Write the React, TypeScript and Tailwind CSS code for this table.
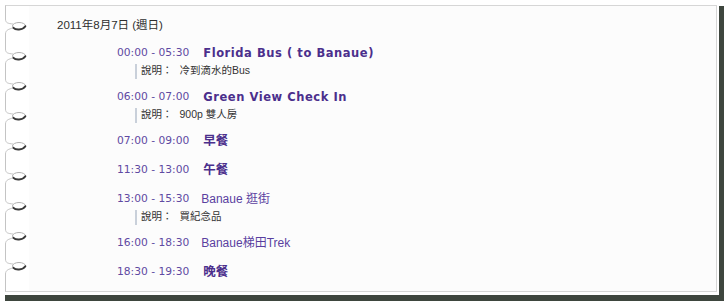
import React from 'react';

type Item = { time: string; title: string; kind: 'latin' | 'cjk' | 'plain'; desc?: string };

const items: Item[] = [
  { time: '00:00 - 05:30', title: 'Florida Bus ( to Banaue)', kind: 'latin', desc: '冷到滴水的Bus' },
  { time: '06:00 - 07:00', title: 'Green View Check In', kind: 'latin', desc: '900p 雙人房' },
  { time: '07:00 - 09:00', title: '早餐', kind: 'cjk' },
  { time: '11:30 - 13:00', title: '午餐', kind: 'cjk' },
  { time: '13:00 - 15:30', title: 'Banaue 逛街', kind: 'plain', desc: '買紀念品' },
  { time: '16:00 - 18:30', title: 'Banaue梯田Trek', kind: 'plain' },
  { time: '18:30 - 19:30', title: '晚餐', kind: 'cjk' },
];

const rings = [0, 1, 2, 3, 4, 5, 6, 7, 8].map((k) => 20 + k * 30);

// spiral binding drawn down the left edge of the page
const Binding = () => {
  let d = 'M 0.5 0.5 ';
  rings.forEach((c) => {
    d += `L 0.5 ${c - 6} C 0.5 ${c - 2} 3 ${c - 1.5} 8 ${c - 1} `;
    d += `M 8 ${c + 3} C 4 ${c + 4} 0.5 ${c + 5} 0.5 ${c + 9} `;
  });
  d += 'L 0.5 286.5';
  return (
    <svg className="absolute left-0 top-[-1px]" width="30" height="288" viewBox="0 0 30 288">
      <path d={d} fill="none" stroke="#c4c4c4" strokeWidth="1" />
      {rings.map((c) => (
        <g key={c}>
          <ellipse cx="14" cy={c + 1} rx="6.5" ry="3.5" fill="none" stroke="#b0b0b0" strokeWidth="1" />
          <path
            d={`M 8.5 ${c + 2.8} C 10.5 ${c + 5.2} 17.5 ${c + 5.4} 20.4 ${c + 1.2}`}
            fill="none"
            stroke="#383838"
            strokeWidth="1.9"
            strokeLinecap="round"
          />
        </g>
      ))}
    </svg>
  );
};

const titleClass = {
  latin: 'ml-[14px] text-[11.5px] tracking-[0.55px] font-bold text-[#4b2f8c]',
  cjk: 'ml-[14px] text-[12.5px] font-bold text-[#4b2f8c]',
  plain: 'ml-[12px] text-[12px] text-[#5a3fa0]',
};

export default function App() {
  return (
    <div className="w-[724px] h-[301px] bg-white">
      <div className="w-[719px] h-[295px] bg-white pt-[5px] pl-[5px] pr-[2px] pb-[3px] shadow-[5px_6px_0_#3e463e]">
        <div className="relative h-full border-t border-r border-b border-[#d6d6d6]">
          <Binding />
          <div className="h-full ml-[24px] bg-[#fcfcfc] pl-[28px] pt-[11px]">
            <div
              className="h-[16px] leading-[16px] text-[11.5px] text-[#2e2e2e]"
              style={{ fontFamily: '"Liberation Sans", "Noto Sans CJK TC", sans-serif' }}
            >
              2011年8月7日 (週日)
            </div>
            <div className="ml-[60px] mt-[11px] flex flex-col">
              {items.map((it) => (
                <div key={it.time} className="mb-[11px]">
                  <div className="flex items-center h-[18px] leading-[18px] whitespace-nowrap">
                    <span
                      className="text-[10.7px] text-[#5f4aa2]"
                      style={{ fontFamily: '"DejaVu Sans", sans-serif' }}
                    >
                      {it.time}
                    </span>
                    <span
                      className={titleClass[it.kind]}
                      style={{
                        fontFamily:
                          it.kind === 'latin'
                            ? '"DejaVu Sans", "Noto Sans CJK TC", sans-serif'
                            : '"Liberation Sans", "Noto Sans CJK TC", sans-serif',
                      }}
                    >
                      {it.title}
                    </span>
                  </div>
                  {it.desc && (
                    <div
                      className="flex items-center h-[12px] mt-[3px] ml-[18px] text-[10.5px] text-[#333333] whitespace-nowrap"
                      style={{ fontFamily: '"Liberation Sans", "Noto Sans CJK TC", sans-serif' }}
                    >
                      <span className="w-[2px] h-[15px] bg-[#c9d0da] mr-[4px] shrink-0" />
                      <span>說明：</span>
                      <span className="ml-[7px]">{it.desc}</span>
                    </div>
                  )}
                </div>
              ))}
            </div>
          </div>
        </div>
      </div>
    </div>
  );
}
